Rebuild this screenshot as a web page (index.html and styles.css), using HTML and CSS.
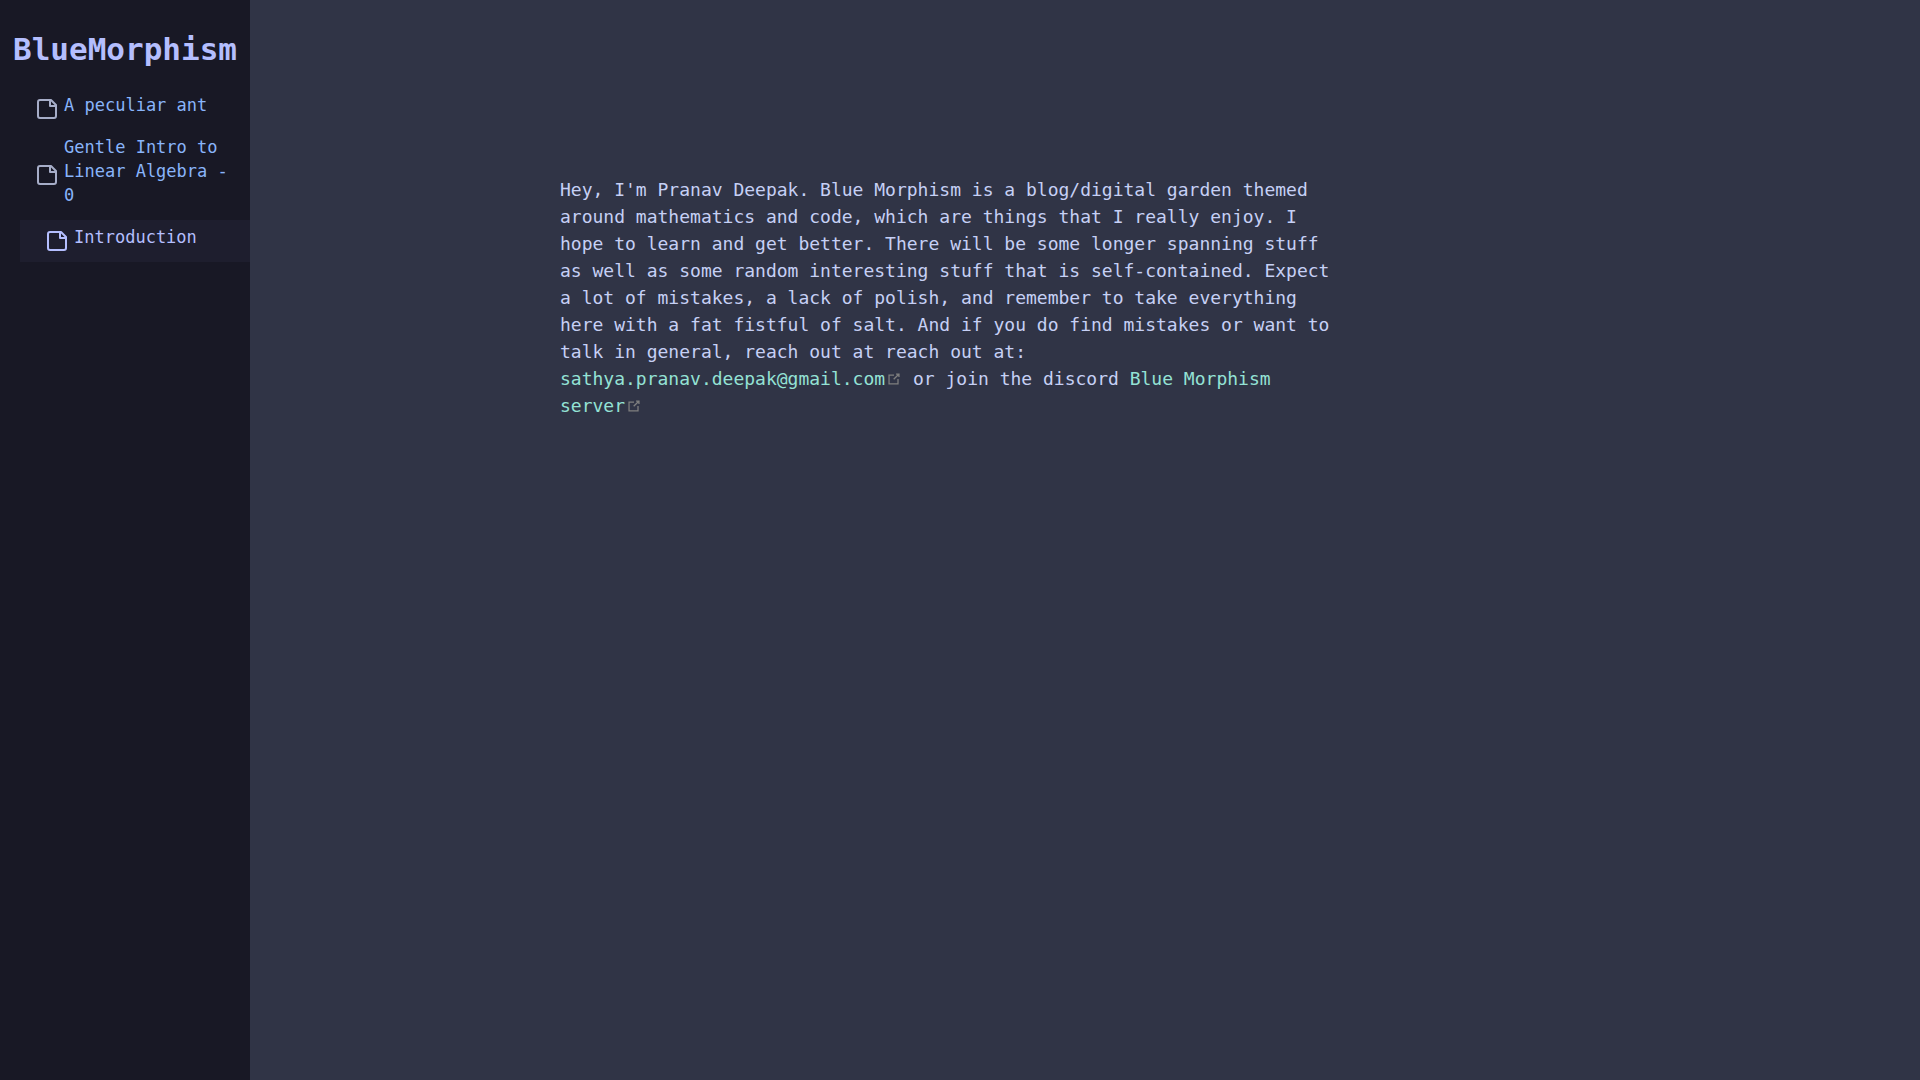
FILE: index.html
```html
<!DOCTYPE html>
<html lang="en">
<head>
    <meta charset="UTF-8">
    <meta name="viewport" content="width=device-width, initial-scale=1.0">
    <title>BlueMorphism</title>
    <link rel="stylesheet" href="styles.css">
</head>
<body>
    <nav class="sidebar">
        <h1>BlueMorphism</h1>
        <ul class="pages">
            <li>
                <a class="page" href="#ant">
                    <svg class="file" viewBox="0 0 20 20"><path d="M3 1h11l5 5v11a2 2 0 0 1-2 2H3a2 2 0 0 1-2-2V3a2 2 0 0 1 2-2z"/><path d="M13 1v6h6"/></svg>
                    <span>A peculiar ant</span>
                </a>
            </li>
            <li>
                <a class="page" href="#linear-algebra">
                    <svg class="file" viewBox="0 0 20 20"><path d="M3 1h11l5 5v11a2 2 0 0 1-2 2H3a2 2 0 0 1-2-2V3a2 2 0 0 1 2-2z"/><path d="M13 1v6h6"/></svg>
                    <span>Gentle Intro to Linear Algebra - 0</span>
                </a>
            </li>
            <li>
                <a class="page active" href="#introduction">
                    <svg class="file" viewBox="0 0 20 20"><path d="M3 1h11l5 5v11a2 2 0 0 1-2 2H3a2 2 0 0 1-2-2V3a2 2 0 0 1 2-2z"/><path d="M13 1v6h6"/></svg>
                    <span>Introduction</span>
                </a>
            </li>
        </ul>
    </nav>

    <main>
        <article>
            <p>Hey, I'm Pranav Deepak. Blue Morphism is a blog/digital garden themed around mathematics and code, which are things that I really enjoy. I hope to learn and get better. There will be some longer spanning stuff as well as some random interesting stuff that is self-contained. Expect a lot of mistakes, a lack of polish, and remember to take everything here with a fat fistful of salt. And if you do find mistakes or want to talk in general, reach out at reach out at: <a href="mailto:sathya.pranav.deepak@gmail.com">sathya.pranav.deepak@gmail.com<svg class="external" viewBox="0 0 100 100"><path d="M50 26H19v55h56V50M48 52l32-32M63 19h18v18"/></svg></a> or join the discord <a href="#discord">Blue Morphism server<svg class="external" viewBox="0 0 100 100"><path d="M50 26H19v55h56V50M48 52l32-32M63 19h18v18"/></svg></a></p>
        </article>
    </main>
</body>
</html>
```

FILE: styles.css
```css
body {
    display: flex;
    min-height: 100vh;
    margin: 0;
    background-color: #303446;
    color: #c6d0f5;
    font-family: "DejaVu Sans Mono", monospace;
    font-size: 18px;
    line-height: 27px;
}
a {
    color: #94e2d5;
    text-decoration: none;
}

/* sidebar */
.sidebar {
    flex: none;
    width: 250px;
    background-color: #181825;
}
h1 {
    margin: 25px 0 15px;
    color: #b4befe;
    font-size: 31px;
    line-height: 48px;
    text-align: center;
}
.pages {
    margin: 0;
    padding: 0;
    list-style: none;
}
.page {
    display: flex;
    align-items: center;
    gap: 7px;
    margin-left: 20px;
    padding: 5px 17px;
    color: #89b4fa;
    font-size: 17px;
    line-height: 24px;
}
.page span {
    margin-bottom: 8px;
}
.page.active {
    padding-left: 27px;
    background-color: #1e1e2e;
    color: #b4befe;
}
.file {
    flex: none;
    width: 20px;
    height: 20px;
    fill: none;
    stroke: #a6adc8;
    stroke-width: 2;
    stroke-linejoin: round;
}
.active .file {
    stroke: #b4befe;
}

/* content */
main {
    flex: 1;
    /* same gap on the right as the sidebar takes on the left */
    padding: 176px 250px 0 0;
}
article {
    box-sizing: border-box;
    max-width: 800px;
    margin: 0 auto;
    padding-right: 20px;
}
p {
    margin: 0;
}
.external {
    width: 16px;
    height: 16px;
    margin-left: 1px;
    vertical-align: -2px;
    fill: none;
    stroke: #7f7f7f;
    stroke-width: 8;
}
```
